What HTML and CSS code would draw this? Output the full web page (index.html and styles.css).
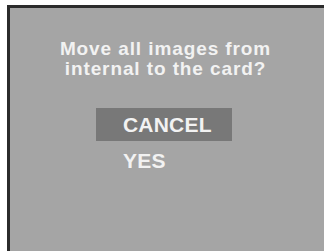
FILE: index.html
```html
<!DOCTYPE html>
<html>
<head>
<meta charset="utf-8">
<link rel="stylesheet" href="styles.css">
</head>
<body>
<div class="screen">
  <div class="panel">
    <p class="question">Move all images from<br>internal to the card?</p>
    <div class="menu">
      <div class="option selected">CANCEL</div>
      <div class="option">YES</div>
    </div>
  </div>
</div>
</body>
</html>
```

FILE: styles.css
```css
html, body {
  margin: 0;
  padding: 0;
  background: #ffffff;
  width: 324px;
  height: 251px;
  overflow: hidden;
}
.screen {
  height: 251px;
  padding: 5px 0 0 7px;
  box-sizing: border-box;
  display: flex;
}
.panel {
  flex: 1;
  background: #a5a5a5;
  border-top: 3px solid #2b2b2b;
  border-left: 3px solid #2b2b2b;
  padding-top: 31px;
  display: flex;
  flex-direction: column;
  font-family: "Liberation Sans", Arial, sans-serif;
  font-weight: bold;
  color: #f2f2f2;
}
.question {
  margin: 0;
  text-align: center;
  font-size: 19px;
  line-height: 20px;
  letter-spacing: 0.9px;
  padding-right: 3px;
}
.menu {
  margin-top: 29px;
  margin-left: 86px;
  width: 136px;
  display: flex;
  flex-direction: column;
}
.option {
  height: 33px;
  line-height: 33px;
  padding-left: 27px;
  font-size: 21px;
  letter-spacing: 0.2px;
}
.option + .option {
  margin-top: 3px;
}
.selected {
  background: #787878;
}
```
